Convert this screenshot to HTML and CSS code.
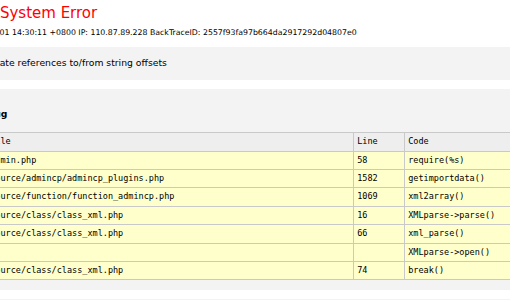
FILE: index.html
```html
<!DOCTYPE html>
<html lang="en">
<head>
    <meta charset="UTF-8" />
    <meta name="viewport" content="width=device-width, initial-scale=1.0"/>
    <title>Discuz! System Error</title>
    <link rel="stylesheet" href="styles.css">
</head>
<body>
    <div id="container">
        <h1>Discuz! System Error</h1>
        <div class="time">Time: 2015-06-01 14:30:11 +0800 IP: 110.87.89.228 BackTraceID: 2557f93fa97b664da2917292d04807e0</div>

        <div class="info">Cannot create references to/from string offsets</div>

        <div class="info">
            <p><strong>PHP Debug</strong></p>
            <table class="table">
                <colgroup>
                    <col class="col-no">
                    <col class="col-file">
                    <col class="col-line">
                    <col>
                </colgroup>
                <tr class="bg2"><td>No.</td><td>File</td><td>Line</td><td>Code</td></tr>
                <tr class="bg1"><td>1</td><td>admin.php</td><td>58</td><td>require(%s)</td></tr>
                <tr class="bg1"><td>2</td><td>source/admincp/admincp_plugins.php</td><td>1582</td><td>getimportdata()</td></tr>
                <tr class="bg1"><td>3</td><td>source/function/function_admincp.php</td><td>1069</td><td>xml2array()</td></tr>
                <tr class="bg1"><td>4</td><td>source/class/class_xml.php</td><td>16</td><td>XMLparse-&gt;parse()</td></tr>
                <tr class="bg1"><td>5</td><td>source/class/class_xml.php</td><td>66</td><td>xml_parse()</td></tr>
                <tr class="bg1"><td>6</td><td></td><td></td><td>XMLparse-&gt;open()</td></tr>
                <tr class="bg1"><td>7</td><td>source/class/class_xml.php</td><td>74</td><td>break()</td></tr>
            </table>
        </div>

        <div class="help">Discuz! 已经将此出错信息详细记录, 由此给您带来的访问不便我们深表歉意.</div>
    </div>
</body>
</html>
```

FILE: styles.css
```css
* {
    box-sizing: border-box;
}

body {
    margin: 0;
    overflow: hidden;
    background: #fff;
    color: #000;
    font-family: "DejaVu Sans", Verdana, "Noto Sans CJK SC", sans-serif;
    font-size: 7.6px;
    line-height: 9.2px;
}

#container {
    width: 645px;
    margin-left: -60px;
}

h1 {
    margin: 4px 0 6px;
    color: #ff0000;
    font-size: 15px;
    font-weight: normal;
    line-height: normal;
}

.time {
    margin-bottom: 9.3px;
    font-size: 7.8px;
}

.info,
.help {
    background: #f3f3f3;
    border-radius: 6px;
    padding: 9.2px;
    margin-bottom: 9.25px;
    font-size: 9.25px;
    line-height: 14.8px;
}

.help {
    font-size: 6px;
}

.info p {
    margin: 9.25px 0 10px;
}

.table {
    width: 100%;
    table-layout: fixed;
    border-collapse: separate;
    border-spacing: 1px;
    background: #c9c9c9;
    font-family: "DejaVu Sans Mono", "Liberation Mono", monospace;
    font-size: 8.5px;
    line-height: 11.4px;
}

.col-no {
    width: 36px;
}

.col-file {
    width: 366px;
}

.col-line {
    width: 50px;
}

.table td {
    padding: 3px;
    white-space: nowrap;
    overflow: hidden;
}

.bg1 {
    background: #ffffcc;
}

.bg2 {
    background: #eeeeee;
}
```
